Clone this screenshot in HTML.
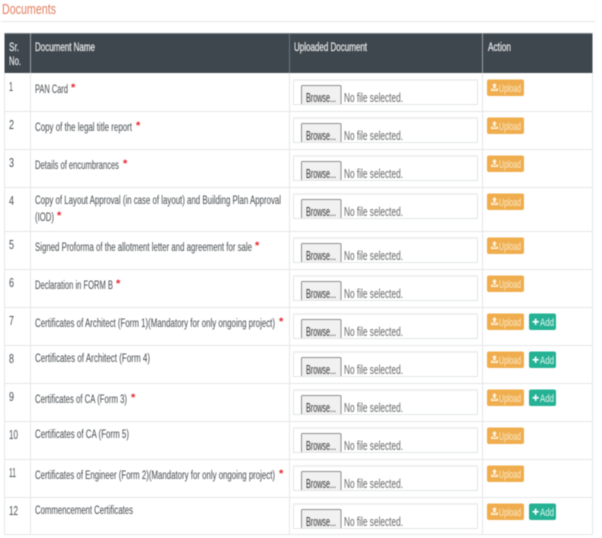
<!DOCTYPE html>
<html><head><meta charset="utf-8">
<style>
html,body{margin:0;padding:0;background:#fff;width:602px;height:538px;overflow:hidden}
svg{display:block;filter:blur(.4px)}
text{font-family:"Liberation Sans",sans-serif;font-size:11.5px;fill:#43484c}
.h{fill:#eef0f1;font-size:11.5px;stroke:#eef0f1;stroke-width:.2px}
.n{fill:#4c5155;font-size:12.5px}
.s{fill:#e8212b;font-size:11px;font-weight:bold}
.b{fill:#333;font-size:12.5px}
.f{fill:#666;font-size:12.5px}
.u{fill:#fbeacb;font-size:11px}
.a{fill:#e3f6f0;font-size:11px}
</style></head><body>
<svg width="602" height="538" viewBox="0 0 602 538" xmlns="http://www.w3.org/2000/svg">
<defs>
<g id="box">
<rect x="293.5" y="6.5" width="184" height="25" fill="#fff" stroke="#e2e4e6"/>
<rect x="293" y="6" width="185" height="2" fill="#eeeff0"/>
<path d="M301.5 32V13.500q0-1 1-1h37.500q1 0 1 1V32" fill="#f1f1f1" stroke="#8e8e8e"/>
<rect x="293" y="31" width="185" height="1" fill="#e2e4e6"/>
</g>
<g id="up">
<rect x="487" y="6.500" width="37" height="16.500" rx="2" fill="#efad4d"/>
<path d="M491 18h7v-2.600h-1.500v1.200h-4v-1.200H491zM493.400 15.800h2.200v-3h1.500l-2.600-2.800-2.600 2.800h1.500z" fill="#fdf3e0"/>
</g>
<g id="ad">
<rect x="529" y="6.500" width="27" height="16.500" rx="2" fill="#25b194"/>
<path d="M532.500 13.900h2.300v-2.300h1.700v2.300h2.300v1.700h-2.300v2.300h-1.700v-2.300h-2.300z" fill="#f4fbf9"/>
</g>
</defs>
<text x="2" y="14" textLength="54" lengthAdjust="spacingAndGlyphs" style="font-size:15px;fill:#e27d5e">Documents</text>
<rect x="1" y="21" width="594" height="1" fill="#e5e6e7"/>

<rect x="4.500" y="33" width="588" height="40" fill="#3f474e"/>
<rect x="4.500" y="33" width="588" height="1" fill="#767c81"/>
<rect x="30" y="33" width="1" height="40" fill="#9aa0a4"/>
<rect x="289" y="33" width="1" height="40" fill="#6d7479"/>
<rect x="482" y="33" width="1" height="40" fill="#9aa0a4"/>
<text class="h" x="9" y="51" textLength="10" lengthAdjust="spacingAndGlyphs">Sr.</text>
<text class="h" x="9" y="65" textLength="12" lengthAdjust="spacingAndGlyphs">No.</text>
<text class="h" x="35" y="51" textLength="60" lengthAdjust="spacingAndGlyphs">Document Name</text>
<text class="h" x="294" y="51" textLength="73" lengthAdjust="spacingAndGlyphs">Uploaded Document</text>
<text class="h" x="488" y="51" textLength="23" lengthAdjust="spacingAndGlyphs">Action</text>

<path d="M4.500 73V534.500H592.500V73M30.500 73V534.500M289.500 73V534.500M482.500 73V534.500M4.500 111.500H592.500M4.500 149.500H592.500M4.500 187.500H592.500M4.500 231.500H592.500M4.500 269.500H592.500M4.500 307.500H592.500M4.500 345.500H592.500M4.500 383.500H592.500M4.500 421.500H592.500M4.500 459.500H592.500M4.500 497.500H592.500" fill="none" stroke="#e4e6e7"/>

<g transform="translate(0,73)"><use href="#box"/><use href="#up"/>
<text class="b" x="306" y="29" textLength="30" lengthAdjust="spacingAndGlyphs">Browse...</text><text class="f" x="344" y="29" textLength="59" lengthAdjust="spacingAndGlyphs">No file selected.</text><text class="u" x="499" y="19" textLength="22" lengthAdjust="spacingAndGlyphs">Upload</text>
<text class="n" x="9" y="18" textLength="4" lengthAdjust="spacingAndGlyphs">1</text><text x="35" y="20" textLength="33" lengthAdjust="spacingAndGlyphs">PAN Card</text><text class="s" x="71" y="18">*</text></g>

<g transform="translate(0,111)"><use href="#box"/><use href="#up"/>
<text class="b" x="306" y="29" textLength="30" lengthAdjust="spacingAndGlyphs">Browse...</text><text class="f" x="344" y="29" textLength="59" lengthAdjust="spacingAndGlyphs">No file selected.</text><text class="u" x="499" y="19" textLength="22" lengthAdjust="spacingAndGlyphs">Upload</text>
<text class="n" x="9" y="18" textLength="5" lengthAdjust="spacingAndGlyphs">2</text><text x="35" y="20" textLength="97" lengthAdjust="spacingAndGlyphs">Copy of the legal title report</text><text class="s" x="136" y="18">*</text></g>

<g transform="translate(0,149)"><use href="#box"/><use href="#up"/>
<text class="b" x="306" y="29" textLength="30" lengthAdjust="spacingAndGlyphs">Browse...</text><text class="f" x="344" y="29" textLength="59" lengthAdjust="spacingAndGlyphs">No file selected.</text><text class="u" x="499" y="19" textLength="22" lengthAdjust="spacingAndGlyphs">Upload</text>
<text class="n" x="9" y="18" textLength="5" lengthAdjust="spacingAndGlyphs">3</text><text x="35" y="20" textLength="84" lengthAdjust="spacingAndGlyphs">Details of encumbrances</text><text class="s" x="123" y="18">*</text></g>

<g transform="translate(0,187)"><use href="#box"/><use href="#up"/>
<text class="b" x="306" y="29" textLength="30" lengthAdjust="spacingAndGlyphs">Browse...</text><text class="f" x="344" y="29" textLength="59" lengthAdjust="spacingAndGlyphs">No file selected.</text><text class="u" x="499" y="19" textLength="22" lengthAdjust="spacingAndGlyphs">Upload</text>
<text class="n" x="9" y="18" textLength="5" lengthAdjust="spacingAndGlyphs">4</text><text x="35" y="17" textLength="246" lengthAdjust="spacingAndGlyphs">Copy of Layout Approval (in case of layout) and Building Plan Approval</text><text x="35" y="34" textLength="19" lengthAdjust="spacingAndGlyphs">(IOD)</text><text class="s" x="57" y="32">*</text></g>

<g transform="translate(0,231)"><use href="#box"/><use href="#up"/>
<text class="b" x="306" y="29" textLength="30" lengthAdjust="spacingAndGlyphs">Browse...</text><text class="f" x="344" y="29" textLength="59" lengthAdjust="spacingAndGlyphs">No file selected.</text><text class="u" x="499" y="19" textLength="22" lengthAdjust="spacingAndGlyphs">Upload</text>
<text class="n" x="9" y="18" textLength="5" lengthAdjust="spacingAndGlyphs">5</text><text x="35" y="20" textLength="217" lengthAdjust="spacingAndGlyphs">Signed Proforma of the allotment letter and agreement for sale</text><text class="s" x="255" y="18">*</text></g>

<g transform="translate(0,269)"><use href="#box"/><use href="#up"/>
<text class="b" x="306" y="29" textLength="30" lengthAdjust="spacingAndGlyphs">Browse...</text><text class="f" x="344" y="29" textLength="59" lengthAdjust="spacingAndGlyphs">No file selected.</text><text class="u" x="499" y="19" textLength="22" lengthAdjust="spacingAndGlyphs">Upload</text>
<text class="n" x="9" y="18" textLength="5" lengthAdjust="spacingAndGlyphs">6</text><text x="35" y="20" textLength="78" lengthAdjust="spacingAndGlyphs">Declaration in FORM B</text><text class="s" x="116" y="18">*</text></g>

<g transform="translate(0,307)"><use href="#box"/><use href="#up"/><use href="#ad"/>
<text class="b" x="306" y="29" textLength="30" lengthAdjust="spacingAndGlyphs">Browse...</text><text class="f" x="344" y="29" textLength="59" lengthAdjust="spacingAndGlyphs">No file selected.</text><text class="u" x="499" y="19" textLength="22" lengthAdjust="spacingAndGlyphs">Upload</text><text class="a" x="540" y="19" textLength="14" lengthAdjust="spacingAndGlyphs">Add</text>
<text class="n" x="9" y="18" textLength="5" lengthAdjust="spacingAndGlyphs">7</text><text x="35" y="20" textLength="240" lengthAdjust="spacingAndGlyphs">Certificates of Architect (Form 1)(Mandatory for only ongoing project)</text><text class="s" x="279" y="18">*</text></g>

<g transform="translate(0,345)"><use href="#box"/><use href="#up"/><use href="#ad"/>
<text class="b" x="306" y="29" textLength="30" lengthAdjust="spacingAndGlyphs">Browse...</text><text class="f" x="344" y="29" textLength="59" lengthAdjust="spacingAndGlyphs">No file selected.</text><text class="u" x="499" y="19" textLength="22" lengthAdjust="spacingAndGlyphs">Upload</text><text class="a" x="540" y="19" textLength="14" lengthAdjust="spacingAndGlyphs">Add</text>
<text class="n" x="9" y="18" textLength="5" lengthAdjust="spacingAndGlyphs">8</text><text x="35" y="17" textLength="115" lengthAdjust="spacingAndGlyphs">Certificates of Architect (Form 4)</text></g>

<g transform="translate(0,383)"><use href="#box"/><use href="#up"/><use href="#ad"/>
<text class="b" x="306" y="29" textLength="30" lengthAdjust="spacingAndGlyphs">Browse...</text><text class="f" x="344" y="29" textLength="59" lengthAdjust="spacingAndGlyphs">No file selected.</text><text class="u" x="499" y="19" textLength="22" lengthAdjust="spacingAndGlyphs">Upload</text><text class="a" x="540" y="19" textLength="14" lengthAdjust="spacingAndGlyphs">Add</text>
<text class="n" x="9" y="18" textLength="5" lengthAdjust="spacingAndGlyphs">9</text><text x="35" y="20" textLength="92" lengthAdjust="spacingAndGlyphs">Certificates of CA (Form 3)</text><text class="s" x="131" y="18">*</text></g>

<g transform="translate(0,421)"><use href="#box"/><use href="#up"/>
<text class="b" x="306" y="29" textLength="30" lengthAdjust="spacingAndGlyphs">Browse...</text><text class="f" x="344" y="29" textLength="59" lengthAdjust="spacingAndGlyphs">No file selected.</text><text class="u" x="499" y="19" textLength="22" lengthAdjust="spacingAndGlyphs">Upload</text>
<text class="n" x="9" y="18" textLength="9" lengthAdjust="spacingAndGlyphs">10</text><text x="35" y="17" textLength="94" lengthAdjust="spacingAndGlyphs">Certificates of CA (Form 5)</text></g>

<g transform="translate(0,459)"><use href="#box"/><use href="#up"/>
<text class="b" x="306" y="29" textLength="30" lengthAdjust="spacingAndGlyphs">Browse...</text><text class="f" x="344" y="29" textLength="59" lengthAdjust="spacingAndGlyphs">No file selected.</text><text class="u" x="499" y="19" textLength="22" lengthAdjust="spacingAndGlyphs">Upload</text>
<text class="n" x="9" y="18" textLength="7" lengthAdjust="spacingAndGlyphs">11</text><text x="35" y="20" textLength="240" lengthAdjust="spacingAndGlyphs">Certificates of Engineer (Form 2)(Mandatory for only ongoing project)</text><text class="s" x="279" y="18">*</text></g>

<g transform="translate(0,497)"><use href="#box"/><use href="#up"/><use href="#ad"/>
<text class="b" x="306" y="29" textLength="30" lengthAdjust="spacingAndGlyphs">Browse...</text><text class="f" x="344" y="29" textLength="59" lengthAdjust="spacingAndGlyphs">No file selected.</text><text class="u" x="499" y="19" textLength="22" lengthAdjust="spacingAndGlyphs">Upload</text><text class="a" x="540" y="19" textLength="14" lengthAdjust="spacingAndGlyphs">Add</text>
<text class="n" x="9" y="18" textLength="9" lengthAdjust="spacingAndGlyphs">12</text><text x="35" y="17" textLength="98" lengthAdjust="spacingAndGlyphs">Commencement Certificates</text></g>
</svg>
</body></html>
